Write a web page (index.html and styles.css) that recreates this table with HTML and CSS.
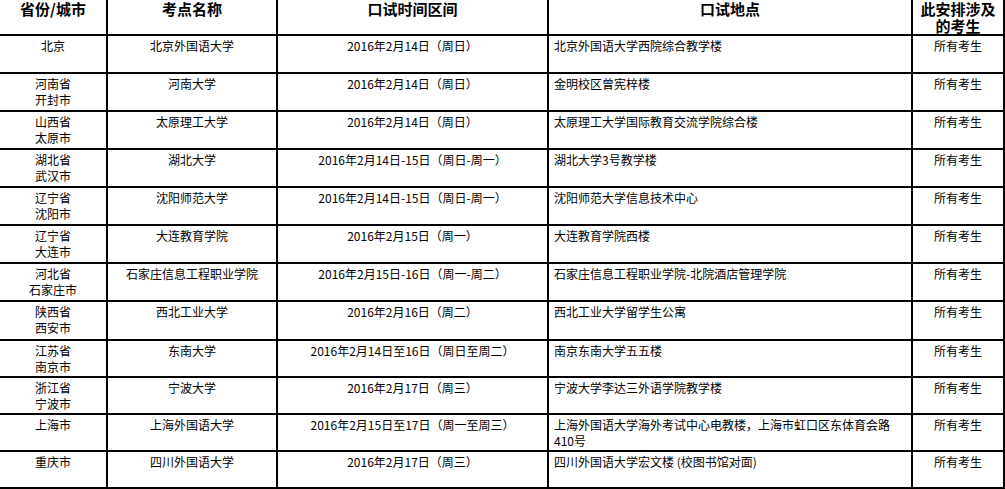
FILE: index.html
```html
<!DOCTYPE html>
<html lang="zh-CN">
<head>
<meta charset="utf-8">
<title>口试安排</title>
<link rel="stylesheet" href="styles.css">
</head>
<body>
<table class="sched">
  <thead>
    <tr class="hdr">
      <th class="c1">省份/城市</th>
      <th class="c2">考点名称</th>
      <th class="c3">口试时间区间</th>
      <th class="c4">口试地点</th>
      <th class="c5">此安排涉及的考生</th>
    </tr>
  </thead>
  <tbody>
    <tr class="r36">
      <td class="ctr">北京</td>
      <td class="ctr">北京外国语大学</td>
      <td class="ctr">2016年2月14日（周日）</td>
      <td class="lft">北京外国语大学西院综合教学楼</td>
      <td class="ctr">所有考生</td>
    </tr>
    <tr class="r36">
      <td class="ctr">河南省<br>开封市</td>
      <td class="ctr">河南大学</td>
      <td class="ctr">2016年2月14日（周日）</td>
      <td class="lft">金明校区曾宪梓楼</td>
      <td class="ctr">所有考生</td>
    </tr>
    <tr class="r36">
      <td class="ctr">山西省<br>太原市</td>
      <td class="ctr">太原理工大学</td>
      <td class="ctr">2016年2月14日（周日）</td>
      <td class="lft">太原理工大学国际教育交流学院综合楼</td>
      <td class="ctr">所有考生</td>
    </tr>
    <tr class="r36">
      <td class="ctr">湖北省<br>武汉市</td>
      <td class="ctr">湖北大学</td>
      <td class="ctr">2016年2月14日-15日（周日-周一）</td>
      <td class="lft">湖北大学3号教学楼</td>
      <td class="ctr">所有考生</td>
    </tr>
    <tr class="r36">
      <td class="ctr">辽宁省<br>沈阳市</td>
      <td class="ctr">沈阳师范大学</td>
      <td class="ctr">2016年2月14日-15日（周日-周一）</td>
      <td class="lft">沈阳师范大学信息技术中心</td>
      <td class="ctr">所有考生</td>
    </tr>
    <tr class="r36">
      <td class="ctr">辽宁省<br>大连市</td>
      <td class="ctr">大连教育学院</td>
      <td class="ctr">2016年2月15日（周一）</td>
      <td class="lft">大连教育学院西楼</td>
      <td class="ctr">所有考生</td>
    </tr>
    <tr class="r36">
      <td class="ctr">河北省<br>石家庄市</td>
      <td class="ctr">石家庄信息工程职业学院</td>
      <td class="ctr">2016年2月15日-16日（周一-周二）</td>
      <td class="lft">石家庄信息工程职业学院-北院酒店管理学院</td>
      <td class="ctr">所有考生</td>
    </tr>
    <tr class="r37">
      <td class="ctr">陕西省<br>西安市</td>
      <td class="ctr">西北工业大学</td>
      <td class="ctr">2016年2月16日（周二）</td>
      <td class="lft">西北工业大学留学生公寓</td>
      <td class="ctr">所有考生</td>
    </tr>
    <tr class="r35">
      <td class="ctr">江苏省<br>南京市</td>
      <td class="ctr">东南大学</td>
      <td class="ctr">2016年2月14日至16日（周日至周二）</td>
      <td class="lft">南京东南大学五五楼</td>
      <td class="ctr">所有考生</td>
    </tr>
    <tr class="r35">
      <td class="ctr">浙江省<br>宁波市</td>
      <td class="ctr">宁波大学</td>
      <td class="ctr">2016年2月17日（周三）</td>
      <td class="lft">宁波大学李达三外语学院教学楼</td>
      <td class="ctr">所有考生</td>
    </tr>
    <tr class="r35">
      <td class="ctr">上海市</td>
      <td class="ctr">上海外国语大学</td>
      <td class="ctr">2016年2月15日至17日（周一至周三）</td>
      <td class="lft">上海外国语大学海外考试中心电教楼，上海市虹口区东体育会路410号</td>
      <td class="ctr">所有考生</td>
    </tr>
    <tr class="r35">
      <td class="ctr">重庆市</td>
      <td class="ctr">四川外国语大学</td>
      <td class="ctr">2016年2月17日（周三）</td>
      <td class="lft">四川外国语大学宏文楼 (校图书馆对面)</td>
      <td class="ctr">所有考生</td>
    </tr>
  </tbody>
</table>
</body>
</html>
```

FILE: styles.css
```css
html, body {
  margin: 0;
  padding: 0;
  background: #ffffff;
}

body {
  font-family: "Noto Sans CJK SC", "Noto Sans", sans-serif;
  color: #000000;
}

.sched {
  width: 1005px;
  table-layout: fixed;
  border-collapse: separate;
  border-spacing: 0;
}

.sched th,
.sched td {
  box-sizing: border-box;
  border-right: 2px solid #000000;
  border-bottom: 2px solid #000000;
  vertical-align: top;
}

.sched th {
  padding: 0;
  font-size: 15px;
  line-height: 17px;
  font-weight: 700;
  color: #000000;
  text-align: center;
}

.sched th.c5 {
  padding: 0 7px;
}

.c1 { width: 108px; }
.c2 { width: 170px; }
.c3 { width: 271px; }
.c4 { width: 364px; }
.c5 { width: 92px; }

.sched td {
  font-size: 12px;
  line-height: 16px;
  padding: 2px 5px 0 5px;
}

.hdr { height: 36px; }
.r36 { height: 38px; }
.r37 { height: 39px; }
.r35 { height: 37px; }

.ctr { text-align: center; }
.lft { text-align: left; }
```
